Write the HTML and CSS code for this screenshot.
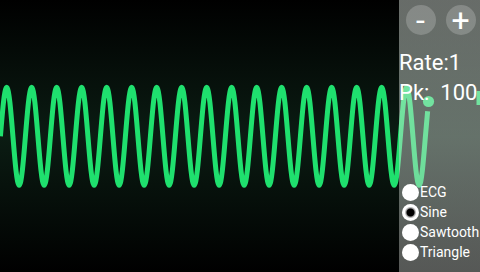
FILE: index.html
```html
<!DOCTYPE html>
<html>
<head>
<meta charset="utf-8">
<link rel="stylesheet" href="styles.css">
</head>
<body>
<div class="screen">
  <svg class="trace" width="480" height="272" viewBox="0 0 480 272">
    <path class="wave" d="M0.42,136.3 c2.038,-25.1 3.988,-49 6.25,-49
      s4.212,23.9 6.25,49 s3.988,49 6.25,49 s4.212,-23.9 6.25,-49 s3.988,-49 6.25,-49
      s4.212,23.9 6.25,49 s3.988,49 6.25,49 s4.212,-23.9 6.25,-49 s3.988,-49 6.25,-49
      s4.212,23.9 6.25,49 s3.988,49 6.25,49 s4.212,-23.9 6.25,-49 s3.988,-49 6.25,-49
      s4.212,23.9 6.25,49 s3.988,49 6.25,49 s4.212,-23.9 6.25,-49 s3.988,-49 6.25,-49
      s4.212,23.9 6.25,49 s3.988,49 6.25,49 s4.212,-23.9 6.25,-49 s3.988,-49 6.25,-49
      s4.212,23.9 6.25,49 s3.988,49 6.25,49 s4.212,-23.9 6.25,-49 s3.988,-49 6.25,-49
      s4.212,23.9 6.25,49 s3.988,49 6.25,49 s4.212,-23.9 6.25,-49 s3.988,-49 6.25,-49
      s4.212,23.9 6.25,49 s3.988,49 6.25,49 s4.212,-23.9 6.25,-49 s3.988,-49 6.25,-49
      s4.212,23.9 6.25,49 s3.988,49 6.25,49 s4.212,-23.9 6.25,-49 s3.988,-49 6.25,-49
      s4.212,23.9 6.25,49 s3.988,49 6.25,49 s4.212,-23.9 6.25,-49 s3.988,-49 6.25,-49
      s4.212,23.9 6.25,49 s3.988,49 6.25,49 s4.212,-23.9 6.25,-49 s3.988,-49 6.25,-49
      s4.212,23.9 6.25,49 s3.988,49 6.25,49 s4.212,-23.9 6.25,-49 s3.988,-49 6.25,-49
      s4.212,23.9 6.25,49 s3.988,49 6.25,49 s4.212,-23.9 6.25,-49 s3.988,-49 6.25,-49
      s4.212,23.9 6.25,49 s3.988,49 6.25,49 s4.212,-23.9 6.25,-49 s3.988,-49 6.25,-49
      s4.212,23.9 6.25,49 s3.988,49 6.25,49 s4.212,-23.9 6.25,-49 s3.988,-49 6.25,-49
      s4.212,23.9 6.25,49 s3.988,49 6.25,49 s4.212,-23.9 6.25,-49 s3.988,-49 6.25,-49
      s4.212,23.9 6.25,49 s3.988,49 6.25,49 s4.212,-23.9 6.25,-49
      q1.2,-14 2.2,-25"/>
    <circle class="head" cx="428.5" cy="101.5" r="5.6"/>
    <path class="wave" d="M479,91 L479,105"/>
  </svg>
  <div class="scope"></div>
  <aside class="panel">
    <div class="zoom-btns">
      <button class="btn">-</button>
      <button class="btn">+</button>
    </div>
    <div class="readout rate">Rate:1</div>
    <div class="readout">Pk:  100</div>
    <div class="modes">
      <label class="mode"><span class="radio"></span>ECG</label>
      <label class="mode"><span class="radio checked"></span>Sine</label>
      <label class="mode"><span class="radio"></span>Sawtooth</label>
      <label class="mode"><span class="radio"></span>Triangle</label>
    </div>
  </aside>
</div>
</body>
</html>
```

FILE: styles.css
```css
html, body {
  margin: 0;
  padding: 0;
  background: #000;
}

.screen {
  position: relative;
  width: 480px;
  height: 272px;
  overflow: hidden;
  display: flex;
  font-family: Roboto, "Noto Sans", sans-serif;
  background: linear-gradient(to bottom, #000 0%, #0b1c13 50%, #000 100%);
}

.trace {
  position: absolute;
  left: 0;
  top: 0;
}

.wave {
  fill: none;
  stroke: #1fe06e;
  stroke-width: 5;
  stroke-linejoin: round;
}

.head {
  fill: #1fe06e;
}

.scope {
  flex: 1;
}

.panel {
  position: relative;
  z-index: 1;
  width: 81px;
  flex: none;
  box-sizing: border-box;
  display: flex;
  flex-direction: column;
  padding-bottom: 10px;
  color: #fff;
  background: linear-gradient(to bottom, rgba(236, 246, 238, 0.44), rgba(196, 200, 196, 0.44));
}

.zoom-btns {
  display: flex;
  gap: 10px;
  padding: 5px 0 0 6.5px;
}

.btn {
  width: 30px;
  height: 30px;
  padding: 0;
  border: 0;
  border-radius: 50%;
  background: rgba(255, 255, 255, 0.2);
  color: #fff;
  font-family: Roboto, sans-serif;
  font-size: 32px;
  line-height: 30px;
  display: flex;
  align-items: center;
  justify-content: center;
}

.readout {
  font-size: 22px;
  line-height: 30px;
  white-space: pre;
}

.rate {
  margin-top: 13px;
}

.modes {
  margin-top: auto;
  display: flex;
  flex-direction: column;
}

.mode {
  display: flex;
  align-items: center;
  height: 20px;
  font-size: 14px;
  white-space: nowrap;
}

.radio {
  flex: none;
  width: 17px;
  height: 17px;
  margin-left: 3px;
  margin-right: 1px;
  border-radius: 50%;
  background: #fff;
}

.radio.checked {
  background: radial-gradient(circle, #000 0 3.5px, #9a9a9a 4.5px, #fff 6px);
}
```
